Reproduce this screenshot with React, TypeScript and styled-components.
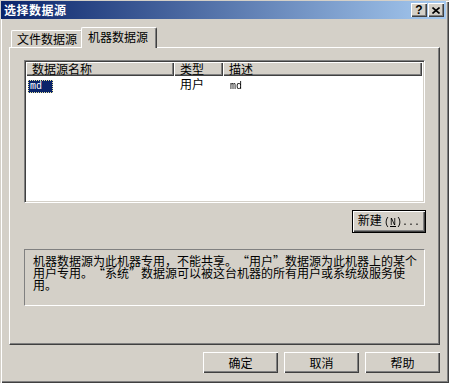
import styled, { createGlobalStyle } from 'styled-components';

const GlobalStyle = createGlobalStyle`
  html, body {
    margin: 0;
    padding: 0;
    background: #d4d0c8;
  }
  body {
    font-family: 'Noto Sans CJK SC', 'Liberation Sans', sans-serif;
    font-size: 12px;
    color: #000;
  }
`;

const Window = styled.div`
  width: 449px;
  height: 383px;
  box-sizing: border-box;
  background: #d4d0c8;
  padding: 1px 3px 3px 1px;
  box-shadow: inset 1px 1px #d4d0c8, inset 2px 2px #fff, inset -1px -1px #404040,
    inset -2px -2px #808080;
  display: flex;
  flex-direction: column;
`;

const TitleBar = styled.div`
  height: 18px;
  display: flex;
  align-items: center;
  padding: 0 2px 0 3px;
  background: linear-gradient(to right, #0a246a, #a6caf0);
  color: #fff;
  font-weight: 700;
  font-size: 12px;
  line-height: 18px;
`;

const TitleText = styled.span`
  letter-spacing: 0.5px;
`;

const TitleButtons = styled.div`
  margin-left: auto;
  display: flex;
  gap: 1px;
`;

const TitleButton = styled.div`
  width: 16px;
  height: 14px;
  box-sizing: border-box;
  background: #d4d0c8;
  box-shadow: inset 1px 1px #fff, inset -1px -1px #404040, inset -2px -2px #808080;
  display: flex;
  align-items: center;
  justify-content: center;
  color: #000;
  font-family: 'Liberation Sans', sans-serif;
  font-weight: 700;
  font-size: 12px;
  line-height: 14px;
`;

const Content = styled.div`
  padding: 8px 0 0 8px;
  display: flex;
  flex-direction: column;
`;

const TabStrip = styled.div`
  display: flex;
  align-items: flex-end;
  height: 20px;
  padding-left: 2px;
  position: relative;
  z-index: 1;
`;

const Tab = styled.div<{ $active?: boolean }>`
  box-sizing: border-box;
  width: ${({ $active }) => ($active ? 76 : 72)}px;
  height: ${({ $active }) => ($active ? 21 : 17)}px;
  margin-left: ${({ $active }) => ($active ? -2 : 0)}px;
  margin-bottom: ${({ $active }) => ($active ? -1 : 0)}px;
  padding: ${({ $active }) => ($active ? '2px 0 0 6px' : '1px 0 0 5px')};
  background: #d4d0c8;
  border-top: 1px solid #fff;
  border-left: 1px solid #fff;
  border-right: 1px solid #404040;
  border-radius: 2px 2px 0 0;
  box-shadow: inset -1px 0 #808080;
  line-height: 14px;
  white-space: nowrap;
  position: relative;
  z-index: ${({ $active }) => ($active ? 2 : 1)};
`;

const Panel = styled.div`
  box-sizing: border-box;
  width: 431px;
  height: 298px;
  border-top: 1px solid #fff;
  border-left: 1px solid #fff;
  border-right: 1px solid #404040;
  border-bottom: 1px solid #404040;
  box-shadow: inset -1px -1px #808080;
  padding: 12px 0 0 14px;
  display: flex;
  flex-direction: column;
`;

const ListView = styled.div`
  box-sizing: border-box;
  width: 401px;
  height: 143px;
  background: #fff;
  border: 1px solid;
  border-color: #808080 #fff #fff #808080;
  box-shadow: inset 1px 1px #404040, inset -1px -1px #d4d0c8;
  padding: 1px;
`;

const HeaderRow = styled.div`
  display: flex;
  height: 14px;
`;

const HeaderCell = styled.div<{ $w: number }>`
  box-sizing: border-box;
  width: ${({ $w }) => $w}px;
  height: 14px;
  padding-left: 6px;
  background: #d4d0c8;
  box-shadow: inset 1px 1px #fff, inset -1px -1px #404040, inset -2px -2px #808080;
  line-height: 14px;
  white-space: nowrap;
`;

const Row = styled.div`
  display: flex;
  height: 13px;
  margin-top: 1px;
`;

const Cell = styled.div<{ $w: number; $pad: number }>`
  box-sizing: border-box;
  width: ${({ $w }) => $w}px;
  height: 13px;
  padding-left: ${({ $pad }) => $pad}px;
  line-height: 13px;
  white-space: nowrap;
`;

const Mono = styled.span`
  display: inline-block;
  font-family: 'Liberation Mono', monospace;
  font-size: 10px;
  color: #000;
  will-change: transform;
`;

const Selected = styled.span`
  display: inline-block;
  box-sizing: border-box;
  width: 25px;
  height: 13px;
  padding-left: 1px;
  background: #0a246a;
  color: #fff;
  border: 1px dotted #e8e4a0;
  font-family: 'Liberation Mono', monospace;
  font-size: 10px;
  line-height: 11px;
`;

const ActionRow = styled.div`
  width: 402px;
  display: flex;
  justify-content: flex-end;
  margin-top: 7px;
`;

const Button = styled.button<{ $default?: boolean }>`
  box-sizing: border-box;
  width: ${({ $default }) => ($default ? 74 : 75)}px;
  height: ${({ $default }) => ($default ? 23 : 21)}px;
  padding: 0;
  margin: 0;
  background: #d4d0c8;
  border: ${({ $default }) => ($default ? '1px solid #000' : 'none')};
  box-shadow: inset 1px 1px #fff, inset -1px -1px #404040, inset -2px -2px #808080;
  font-family: 'Noto Sans CJK SC', 'Liberation Sans', sans-serif;
  font-size: 12px;
  line-height: 12px;
  color: #000;
  white-space: nowrap;
`;

const DescBox = styled.div`
  box-sizing: border-box;
  width: 401px;
  height: 57px;
  margin-top: 16px;
  border: 1px solid;
  border-color: #808080 #fff #fff #808080;
  padding: 5px 0 0 8px;
  line-height: 12px;
  white-space: pre;
`;

// full-width curly quote, as the CJK system font draws it
const Quote = styled.span<{ $open?: boolean }>`
  display: inline-block;
  width: 12px;
  text-align: ${({ $open }) => ($open ? 'right' : 'left')};
`;

const Footer = styled.div`
  width: 431px;
  display: flex;
  justify-content: flex-end;
  gap: 6px;
  margin-top: 7px;
`;

const columns = [148, 49, 199];

export default function App() {
  return (
    <>
      <GlobalStyle />
      <Window>
        <TitleBar>
          <TitleText>选择数据源</TitleText>
          <TitleButtons>
            <TitleButton>?</TitleButton>
            <TitleButton>
              <svg width="8" height="7" viewBox="0 0 8 7">
                <path d="M0.5 0.5 L7.5 6.5 M7.5 0.5 L0.5 6.5" stroke="#000" strokeWidth="1.6" />
              </svg>
            </TitleButton>
          </TitleButtons>
        </TitleBar>
        <Content>
          <TabStrip>
            <Tab>文件数据源</Tab>
            <Tab $active>机器数据源</Tab>
          </TabStrip>
          <Panel>
            <ListView>
              <HeaderRow>
                <HeaderCell $w={columns[0]}>数据源名称</HeaderCell>
                <HeaderCell $w={columns[1]}>类型</HeaderCell>
                <HeaderCell $w={columns[2]}>描述</HeaderCell>
              </HeaderRow>
              <Row>
                <Cell $w={columns[0]} $pad={2}>
                  <Selected>md</Selected>
                </Cell>
                <Cell $w={columns[1]} $pad={6}>用户</Cell>
                <Cell $w={columns[2]} $pad={7}>
                  <Mono>md</Mono>
                </Cell>
              </Row>
            </ListView>
            <ActionRow>
              <Button $default>
                新建 <Mono>(<u>N</u>)...</Mono>
              </Button>
            </ActionRow>
            <DescBox>
              机器数据源为此机器专用，不能共享。<Quote $open>“</Quote>用户<Quote>”</Quote>数据源为此机器上的某个
              {'\n'}用户专用。<Quote $open>“</Quote>系统<Quote>”</Quote>数据源可以被这台机器的所有用户或系统级服务使
              {'\n'}用。
            </DescBox>
          </Panel>
          <Footer>
            <Button>确定</Button>
            <Button>取消</Button>
            <Button>帮助</Button>
          </Footer>
        </Content>
      </Window>
    </>
  );
}
